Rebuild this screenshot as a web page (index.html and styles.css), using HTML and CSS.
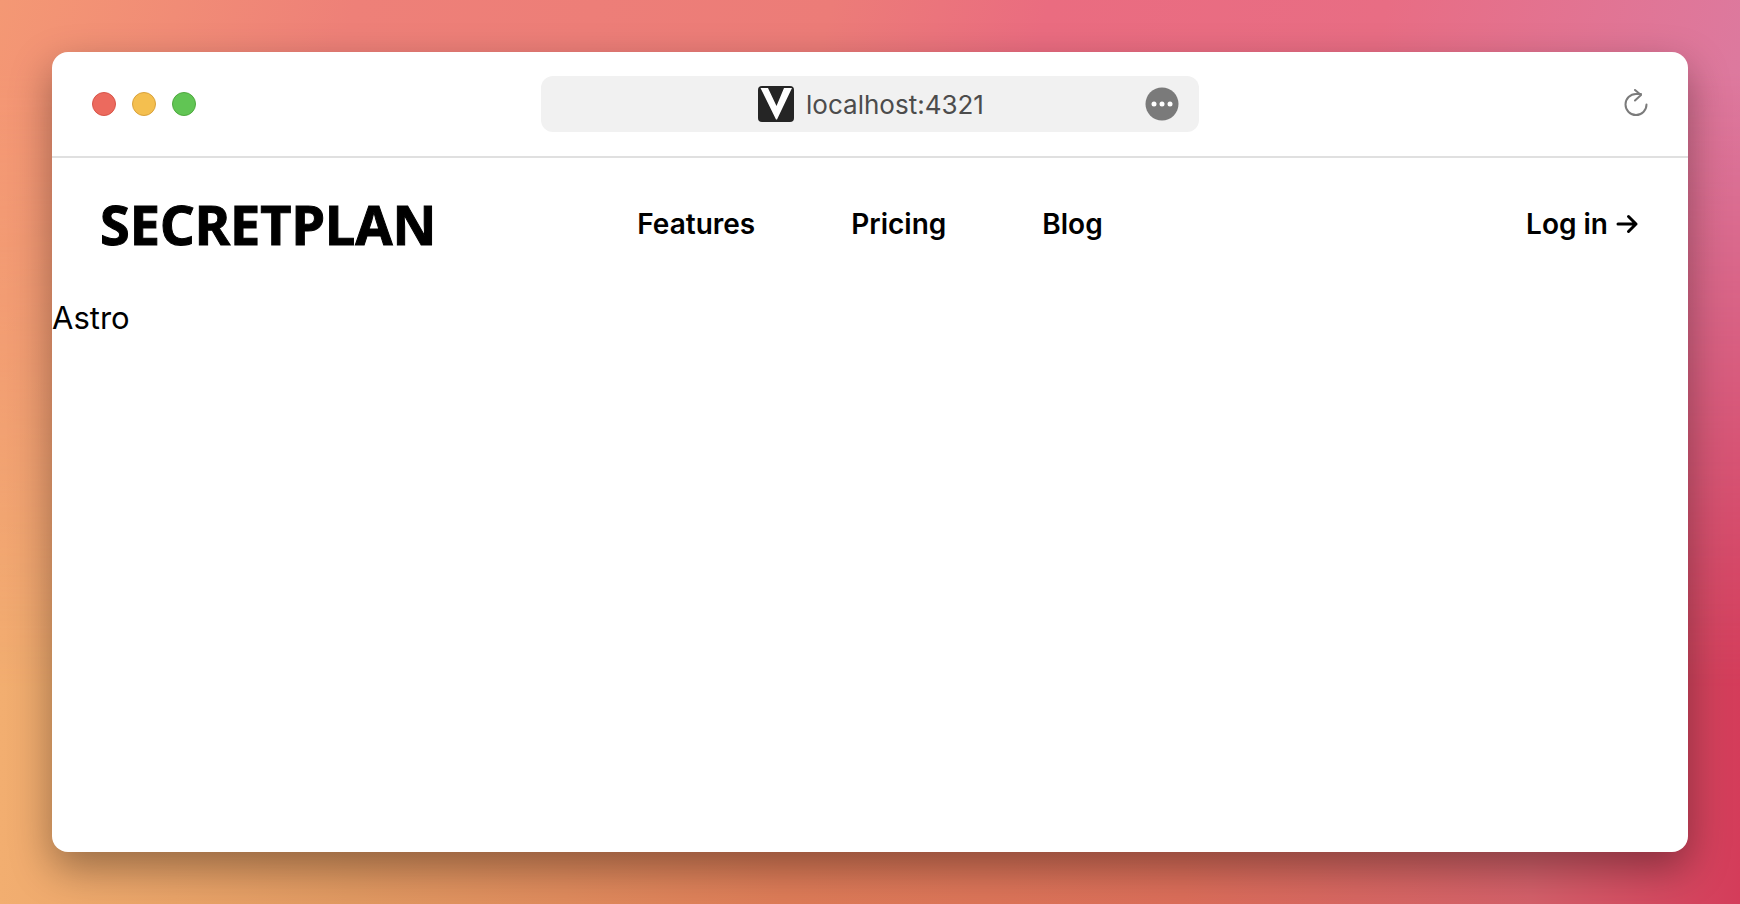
FILE: index.html
```html
<!DOCTYPE html>
<html lang="en">
<head>
<meta charset="utf-8">
<meta name="viewport" content="width=device-width, initial-scale=1">
<title>Secretplan</title>
<link rel="stylesheet" href="styles.css">
</head>
<body class="desktop">
<div class="window">
  <div class="toolbar">
    <div class="lights">
      <button class="light light-close" aria-label="Close"></button>
      <button class="light light-minimize" aria-label="Minimize"></button>
      <button class="light light-zoom" aria-label="Zoom"></button>
    </div>
    <div class="address">
      <div class="location">
        <svg class="favicon" viewBox="0 0 36 36" aria-hidden="true">
          <rect width="36" height="36" rx="4" fill="#252525"/>
          <path d="M2.500 2H10L18.500 20 26 2H34L19 33.500H18Z" fill="#fff"/>
        </svg>
        <span>localhost:4321</span>
      </div>
      <button class="more" aria-label="Page menu">
        <svg viewBox="0 0 34 34" aria-hidden="true">
          <circle cx="17" cy="17" r="16.5" fill="#7a7a7a"/>
          <g fill="#fff"><circle cx="9" cy="17" r="2.500"/><circle cx="17" cy="17" r="2.500"/><circle cx="25" cy="17" r="2.500"/></g>
        </svg>
      </button>
    </div>
    <button class="reload" aria-label="Reload">
      <svg viewBox="0 0 24 28" fill="none" stroke="#7b7b7b" stroke-width="2" stroke-linecap="round" stroke-linejoin="round" aria-hidden="true">
        <path d="M22.500 15.500A10.500 10.500 0 1 1 12 5H17M11 1L17 6 11 11.500"/>
      </svg>
    </button>
  </div>
  <header class="site-header">
    <a class="logo" href="#">SECRETPLAN</a>
    <nav class="nav">
      <a href="#">Features</a>
      <a href="#">Pricing</a>
      <a href="#">Blog</a>
    </nav>
    <a class="login" href="#">Log in
      <svg viewBox="0 0 24 20" fill="none" stroke="currentColor" stroke-width="3" stroke-linecap="round" stroke-linejoin="round" aria-hidden="true"><path d="M2 10H20M12.500 2.500L20 10 12.500 17.500"/></svg>
    </a>
  </header>
  <main class="content">Astro</main>
</div>
</body>
</html>
```
FILE: styles.css
```css
* {
  box-sizing: border-box;
}

.desktop {
  margin: 0;
  min-height: 100vh;
  padding: 52px;
  display: flex;
  position: relative;
  font-family: Inter, "Liberation Sans", sans-serif;
  color: #000;
  background: linear-gradient(90deg, #f2ae70 0%, #e29a62 20%, #de7c58 45%, #dc6e5a 68%, #d4606a 88%, #d43c5a 100%);
}

/* warm-to-pink sweep that fades out towards the bottom edge */
.desktop::before {
  content: "";
  position: absolute;
  inset: 0;
  background: linear-gradient(105deg, #f49874 0%, #ee8078 18%, #ec7c78 42%, #ea6c80 53%, #e86d84 70%, #dc7aa0 90%);
  mask-image: linear-gradient(#000 8%, transparent 76%);
}

.window {
  position: relative;
  flex: 1;
  display: flex;
  flex-direction: column;
  overflow: hidden;
  border-radius: 16px;
  background: #fff;
  box-shadow: 0 16px 40px rgba(0, 0, 0, 0.36);
}

button {
  border: 0;
  padding: 0;
  background: none;
}

svg {
  display: block;
}

a {
  color: inherit;
  text-decoration: none;
}

.toolbar {
  display: grid;
  grid-template-columns: 1fr minmax(0, 658px) 1fr;
  align-items: center;
  padding: 24px 40px;
  border-bottom: 2px solid #e0e0e0;
}

.lights {
  display: flex;
  gap: 16px;
}

.light {
  width: 24px;
  height: 24px;
  border-radius: 50%;
  border: 1px solid;
}

.light-close {
  background: #ec6a5e;
  border-color: #d85549;
}

.light-minimize {
  background: #f4bf4f;
  border-color: #d9a23c;
}

.light-zoom {
  background: #61c554;
  border-color: #4fa93f;
}

.address {
  height: 56px;
  padding: 0 20px;
  display: grid;
  grid-template-columns: 36px 1fr 34px;
  align-items: center;
  border-radius: 12px;
  background: #f1f1f1;
}

.location {
  grid-column: 2;
  display: flex;
  align-items: center;
  justify-content: center;
  gap: 12px;
  font-size: 26px;
  color: #4c4c4c;
}

.favicon {
  width: 36px;
  height: 36px;
}

.more svg {
  width: 34px;
  height: 34px;
}

.reload {
  justify-self: end;
  padding-bottom: 2px;
}

.reload svg {
  width: 24px;
  height: 28px;
}

.site-header {
  display: grid;
  grid-template-columns: 1fr auto 1fr;
  align-items: center;
  padding: 24px 48px 28px;
  font-size: 28px;
  font-weight: 600;
  line-height: 36px;
}

.logo {
  font-family: "Noto Sans", sans-serif;
  font-size: 54px;
  font-weight: 700;
  line-height: 84px;
  -webkit-text-stroke: 1px currentColor;
}

.nav {
  display: flex;
  gap: 96px;
}

.login {
  justify-self: end;
  display: flex;
  align-items: center;
  gap: 8px;
}

.login svg {
  width: 24px;
  height: 20px;
}

.content {
  font-size: 31px;
  line-height: 48px;
}
```
